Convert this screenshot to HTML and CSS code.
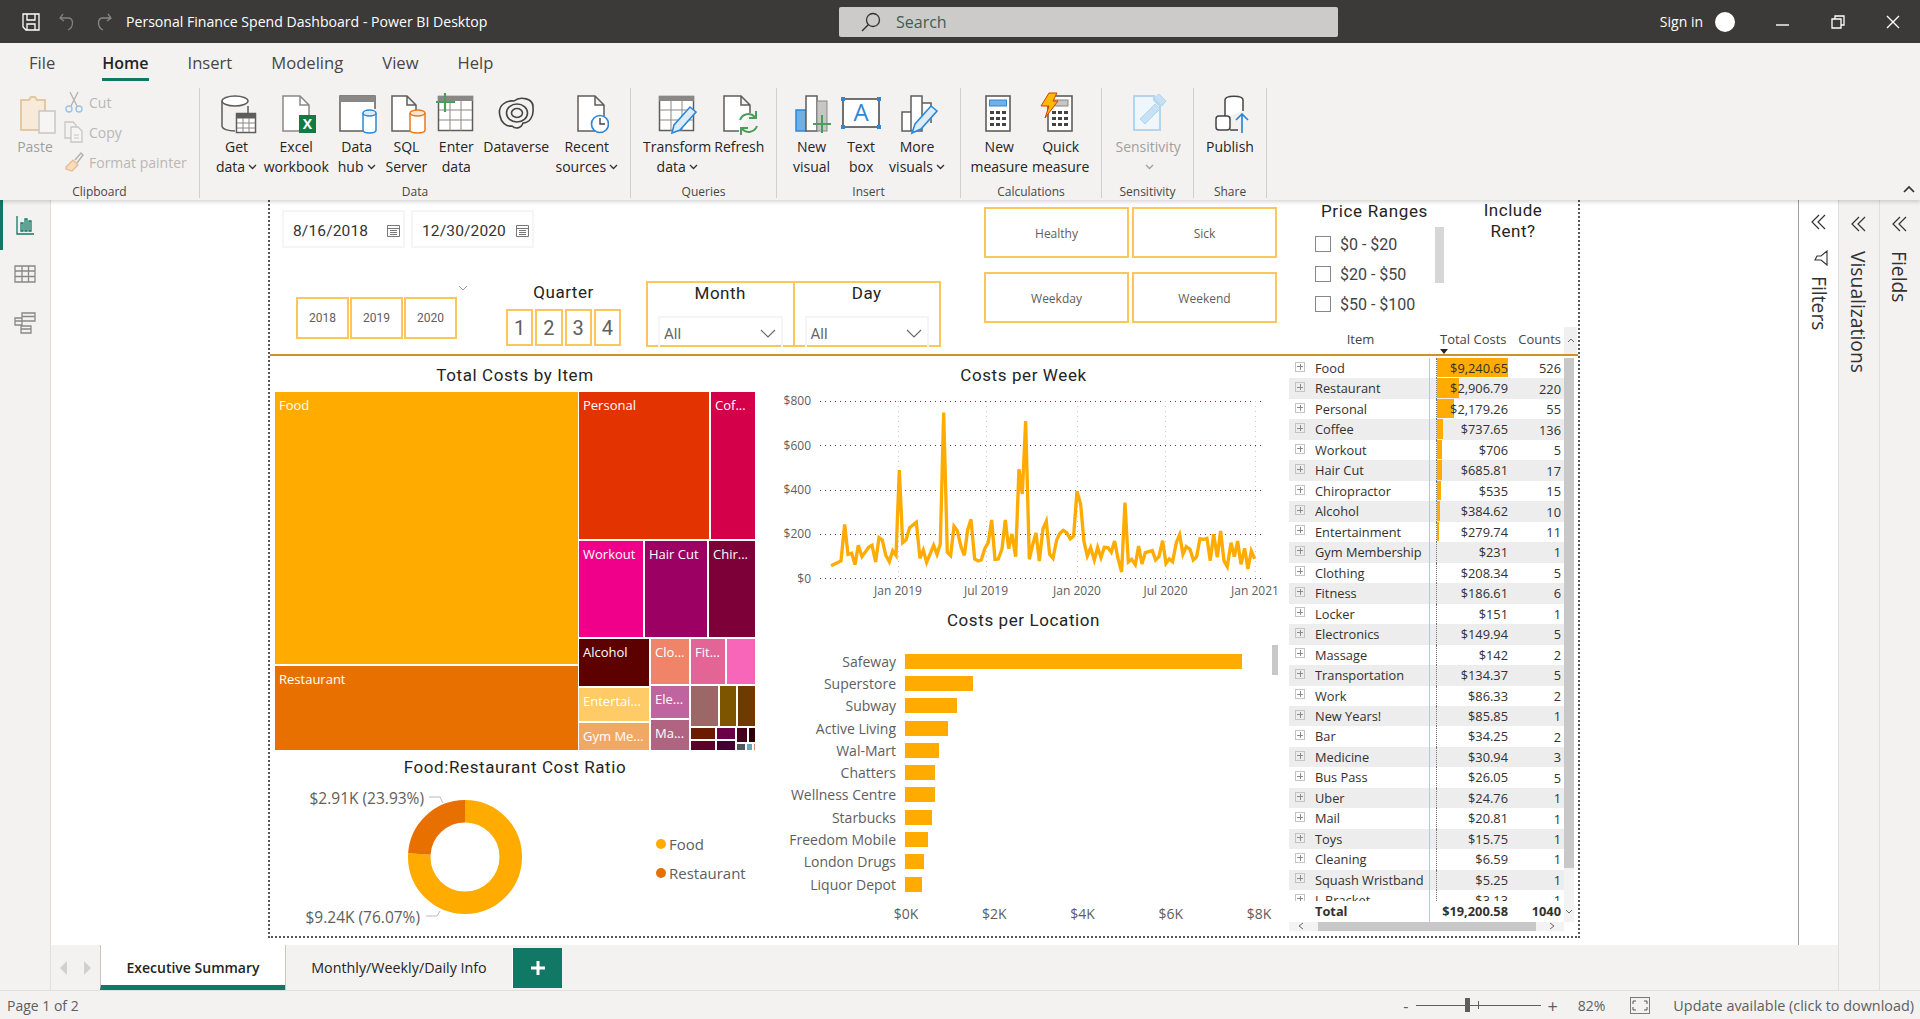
FILE: index.html
```html
<!DOCTYPE html>
<html lang="en">
<head>
    <meta charset="UTF-8">
    <title>Personal Finance Spend Dashboard - Power BI Desktop</title>
    <link rel="stylesheet" href="styles.css">
</head>
<body>
    <!-- title bar -->
    <header class="titlebar">
        <div class="tb-left">
            <svg class="tb-save" width="18" height="18" viewBox="0 0 18 18"><path d="M1 1h16v16H4l-3-3zM5 1v6h8V1M5 17v-6h8v6" fill="none" stroke="#fff" stroke-width="1.3"/></svg>
            <svg class="tb-undo" width="18" height="18" viewBox="0 0 18 18"><path d="M5 1L2 5l4 3M2 5h8c6 0 6 9 0 12" fill="none" stroke="#8a8886" stroke-width="1.3"/></svg>
            <svg class="tb-redo" width="18" height="18" viewBox="0 0 18 18"><path d="M13 1l3 4-4 3M16 5H8c-6 0-6 9 0 12" fill="none" stroke="#8a8886" stroke-width="1.3"/></svg>
            <span class="tb-title">Personal Finance Spend Dashboard - Power BI Desktop</span>
        </div>
        <div class="search">
            <svg width="22" height="22" viewBox="0 0 22 22"><circle cx="13" cy="9" r="6.5" fill="none" stroke="#323130" stroke-width="1.3"/><path d="M8.5 13.5L2 20" stroke="#323130" stroke-width="1.5"/></svg>
            <span>Search</span>
        </div>
        <div class="tb-right">
            <span class="signin">Sign in</span>
            <span class="avatar"></span>
            <svg class="win-btn" width="14" height="14" viewBox="0 0 14 14"><path d="M0 10h13" stroke="#fff" stroke-width="1.4"/></svg>
            <svg class="win-btn" width="14" height="14" viewBox="0 0 14 14"><path d="M1 4h9v9H1zM4 4V1h9v9h-3" fill="none" stroke="#fff" stroke-width="1.3"/></svg>
            <svg class="win-btn" width="14" height="14" viewBox="0 0 14 14"><path d="M1 1l12 12M13 1L1 13" stroke="#fff" stroke-width="1.4"/></svg>
        </div>
    </header>

    <!-- ribbon -->
    <section class="ribbon">
        <nav class="rb-tabs">
            <span class="rb-tab">File</span>
            <span class="rb-tab active">Home</span>
            <span class="rb-tab">Insert</span>
            <span class="rb-tab">Modeling</span>
            <span class="rb-tab">View</span>
            <span class="rb-tab">Help</span>
        </nav>
        <div class="rb-body">
            <div class="rb-group g-clip">
                <div class="rb-items">
                    <div class="rb-item off paste">
                        <svg class="ri" width="44" height="44" viewBox="0 0 44 44"><path d="M8 8h8l2-3h4l2 3h8v30H8z" fill="#f7ead8" stroke="#e3c9a2" stroke-width="2"/><rect x="26" y="19" width="16" height="22" fill="#f6f5f4" stroke="#c8c6c4" stroke-width="1.5"/></svg>
                        <span>Paste</span>
                    </div>
                    <div class="rb-small">
                        <div class="sm-row">
                            <svg width="20" height="22" viewBox="0 0 20 22"><path d="M6 1l7 14M14 1L7 15" stroke="#b3b0ad" stroke-width="1.3"/><circle cx="5" cy="18" r="3" fill="none" stroke="#9cc3e5" stroke-width="1.4"/><circle cx="15" cy="18" r="3" fill="none" stroke="#9cc3e5" stroke-width="1.4"/></svg>
                            <span>Cut</span>
                        </div>
                        <div class="sm-row">
                            <svg width="20" height="22" viewBox="0 0 20 22"><path d="M1 1h8l3 3v13H1z" fill="none" stroke="#c8c6c4" stroke-width="1.3"/><path d="M7 6h7l4 4v11H7z" fill="#f6f5f4" stroke="#c8c6c4" stroke-width="1.3"/><path d="M10 14h5M10 17h5" stroke="#c8c6c4"/></svg>
                            <span>Copy</span>
                        </div>
                        <div class="sm-row">
                            <svg width="20" height="22" viewBox="0 0 20 22"><path d="M2 16l7-7 5 5-6 6-6-2z" fill="#f7dcc0" stroke="#e8b98a" stroke-width="1.2"/><path d="M11 9l6-7 2 2-6 8" fill="none" stroke="#b3b0ad" stroke-width="1.4"/></svg>
                            <span>Format painter</span>
                        </div>
                    </div>
                </div>
                <div class="rb-label">Clipboard</div>
            </div>

            <div class="rb-group g-data">
                <div class="rb-items">
                    <div class="rb-item">
                        <svg class="ri" width="44" height="44" viewBox="0 0 44 44"><ellipse cx="20" cy="9" rx="13" ry="5" fill="#fff" stroke="#5f5d5b" stroke-width="1.5"/><path d="M7 9v25c0 3 6 5 13 5M33 14v8" fill="none" stroke="#5f5d5b" stroke-width="1.5"/><rect x="21.500" y="21.500" width="19" height="19" fill="#fff" stroke="#5f5d5b" stroke-width="1.5"/><rect x="21.500" y="21.500" width="19" height="5" fill="#5f5d5b"/><path d="M28 26v14M34 26v14M22 31h18M22 36h18" stroke="#8a8886"/></svg>
                        <span>Get</span><span>data<svg class="dd" width="9" height="6" viewBox="0 0 9 6"><path d="M1 1l3.500 3.500L8 1" fill="none" stroke="#323130" stroke-width="1.3"/></svg></span>
                    </div>
                    <div class="rb-item">
                        <svg class="ri" width="44" height="44" viewBox="0 0 44 44"><path d="M9 4h17l9 9v26H9z" fill="#fff" stroke="#8a8886" stroke-width="1.5"/><path d="M26 4v9h9" fill="none" stroke="#8a8886" stroke-width="1.5"/><rect x="25" y="23" width="17" height="18" fill="#107c41"/><text class="ri-x" x="33.500" y="37">X</text></svg>
                        <span>Excel</span><span>workbook</span>
                    </div>
                    <div class="rb-item">
                        <svg class="ri" width="44" height="44" viewBox="0 0 44 44"><path d="M32 39H5V4h35v13" fill="#fff" stroke="#5f5d5b" stroke-width="1.5"/><rect x="5" y="4" width="35" height="6" fill="#8a8886"/><path d="M28 21v17c0 4 13 4 13 0V21" fill="#fff" stroke="#2b88d8" stroke-width="1.5"/><ellipse cx="34.500" cy="21" rx="6.500" ry="3" fill="#deecf9" stroke="#2b88d8" stroke-width="1.5"/></svg>
                        <span>Data</span><span>hub<svg class="dd" width="9" height="6" viewBox="0 0 9 6"><path d="M1 1l3.500 3.500L8 1" fill="none" stroke="#323130" stroke-width="1.3"/></svg></span>
                    </div>
                    <div class="rb-item">
                        <svg class="ri" width="44" height="44" viewBox="0 0 44 44"><path d="M26 39H8V4h15l9 9v6M23 4v9h9" fill="#fff" stroke="#5f5d5b" stroke-width="1.5"/><path d="M26 21v17c0 4 15 4 15 0V21" fill="#fff" stroke="#e8791e" stroke-width="1.5"/><ellipse cx="33.500" cy="21" rx="7.500" ry="3" fill="#fde7d3" stroke="#e8791e" stroke-width="1.5"/></svg>
                        <span>SQL</span><span>Server</span>
                    </div>
                    <div class="rb-item">
                        <svg class="ri" width="44" height="44" viewBox="0 0 44 44"><rect x="4.500" y="4.500" width="34" height="34" fill="#fff" stroke="#5f5d5b" stroke-width="1.5"/><rect x="4" y="4" width="35" height="5" fill="#8a8886"/><path d="M16 9v30M27 9v30M5 18h33M5 28h33" stroke="#8a8886"/><path d="M11 1v19M2 10h19" stroke="#4a9e5c" stroke-width="2.2"/></svg>
                        <span>Enter</span><span>data</span>
                    </div>
                    <div class="rb-item">
                        <svg class="ri" width="44" height="44" viewBox="0 0 44 44"><path d="M6 24c-3-11 7-16 14-15 6-5 20-3 19 7 1 9-4 15-10 15-2 6-8 6-11 3-6 1-11-4-12-10z" fill="none" stroke="#444" stroke-width="1.6"/><ellipse cx="23" cy="21" rx="10.500" ry="9" fill="none" stroke="#444" stroke-width="1.6"/><ellipse cx="23" cy="21" rx="5.500" ry="4.500" fill="none" stroke="#444" stroke-width="1.6"/></svg>
                        <span>Dataverse</span><span>&nbsp;</span>
                    </div>
                    <div class="rb-item">
                        <svg class="ri" width="44" height="44" viewBox="0 0 44 44"><path d="M30 39H13V4h17l9 9v11M30 4v9h9" fill="#fff" stroke="#5f5d5b" stroke-width="1.5"/><circle cx="35" cy="32" r="8.500" fill="#fff" stroke="#2b88d8" stroke-width="1.7"/><path d="M35 26v6h5" fill="none" stroke="#444" stroke-width="1.4"/></svg>
                        <span>Recent</span><span>sources<svg class="dd" width="9" height="6" viewBox="0 0 9 6"><path d="M1 1l3.500 3.500L8 1" fill="none" stroke="#323130" stroke-width="1.3"/></svg></span>
                    </div>
                </div>
                <div class="rb-label">Data</div>
            </div>

            <div class="rb-group g-query">
                <div class="rb-items">
                    <div class="rb-item">
                        <svg class="ri" width="44" height="44" viewBox="0 0 44 44"><rect x="4.500" y="4.500" width="34" height="34" fill="#fff" stroke="#5f5d5b" stroke-width="1.5"/><rect x="4" y="4" width="35" height="5" fill="#8a8886"/><path d="M16 9v30M27 9v30M5 18h33M5 28h33" stroke="#8a8886"/><path d="M35 15l6 5-16 18-8 3 2-8z" fill="#deecf9" stroke="#2b88d8" stroke-width="1.6"/></svg>
                        <span>Transform</span><span>data<svg class="dd" width="9" height="6" viewBox="0 0 9 6"><path d="M1 1l3.500 3.500L8 1" fill="none" stroke="#323130" stroke-width="1.3"/></svg></span>
                    </div>
                    <div class="rb-item">
                        <svg class="ri" width="44" height="44" viewBox="0 0 44 44"><path d="M22 39H7V4h17l9 9v8M24 4v9h9" fill="#fff" stroke="#5f5d5b" stroke-width="1.5"/><path d="M23 28a9 9 0 0 1 15-3M40 34a9 9 0 0 1-15 3" fill="none" stroke="#4a9e5c" stroke-width="2"/><path d="M39 19v7h-7M24 43v-7h7" fill="none" stroke="#4a9e5c" stroke-width="2"/></svg>
                        <span>Refresh</span><span>&nbsp;</span>
                    </div>
                </div>
                <div class="rb-label">Queries</div>
            </div>

            <div class="rb-group g-insert">
                <div class="rb-items">
                    <div class="rb-item">
                        <svg class="ri" width="44" height="44" viewBox="0 0 44 44"><rect x="6" y="18" width="10" height="21" fill="#71afe5" stroke="#2b88d8" stroke-width="1.5"/><rect x="16" y="4" width="11" height="35" fill="#fff" stroke="#5f5d5b" stroke-width="1.5"/><rect x="27" y="9" width="10" height="30" fill="#c8c6c4" stroke="#8a8886"/><path d="M32 23v18M23 32h18" stroke="#4a9e5c" stroke-width="2"/></svg>
                        <span>New</span><span>visual</span>
                    </div>
                    <div class="rb-item">
                        <svg class="ri" width="44" height="44" viewBox="0 0 44 44"><rect x="4" y="7" width="36" height="28" fill="#fff" stroke="#444" stroke-width="1.5"/><path d="M2 5h4v4H2zM38 5h4v4h-4zM2 33h4v4H2zM38 33h4v4h-4z" fill="#2b88d8"/><text class="ri-a" x="22" y="29">A</text></svg>
                        <span>Text</span><span>box</span>
                    </div>
                    <div class="rb-item">
                        <svg class="ri" width="44" height="44" viewBox="0 0 44 44"><path d="M7 20h9v19H7zM16 4h11v35H16zM27 11h9v20" fill="#fff" stroke="#5f5d5b" stroke-width="1.5"/><path d="M36 14l6 5-16 18-9 4 3-9z" fill="#deecf9" stroke="#2b88d8" stroke-width="1.6"/></svg>
                        <span>More</span><span>visuals<svg class="dd" width="9" height="6" viewBox="0 0 9 6"><path d="M1 1l3.500 3.500L8 1" fill="none" stroke="#323130" stroke-width="1.3"/></svg></span>
                    </div>
                </div>
                <div class="rb-label">Insert</div>
            </div>

            <div class="rb-group g-calc">
                <div class="rb-items">
                    <div class="rb-item">
                        <svg class="ri" width="44" height="44" viewBox="0 0 44 44"><rect x="9" y="4" width="24" height="35" fill="#fff" stroke="#5f5d5b" stroke-width="1.6"/><rect x="12.500" y="8" width="17" height="6" fill="#71afe5" stroke="#2b88d8"/><path d="M13 19h4v3h-4zM19 19h4v3h-4zM25 19h4v3h-4zM13 25h4v3h-4zM19 25h4v3h-4zM25 25h4v3h-4zM13 31h4v3h-4zM19 31h4v3h-4zM25 31h4v3h-4z" fill="#444"/></svg>
                        <span>New</span><span>measure</span>
                    </div>
                    <div class="rb-item">
                        <svg class="ri" width="44" height="44" viewBox="0 0 44 44"><rect x="9" y="4" width="24" height="35" fill="#fff" stroke="#5f5d5b" stroke-width="1.6"/><rect x="15" y="8" width="14" height="6" fill="#c8c6c4" stroke="#8a8886"/><path d="M13 19h4v3h-4zM19 19h4v3h-4zM25 19h4v3h-4zM13 25h4v3h-4zM19 25h4v3h-4zM25 25h4v3h-4zM13 31h4v3h-4zM19 31h4v3h-4zM25 31h4v3h-4z" fill="#444"/><path d="M10 1h8l-4 8h5L6 26l4-12H2z" fill="#ffb900" stroke="#d83b01"/></svg>
                        <span>Quick</span><span>measure</span>
                    </div>
                </div>
                <div class="rb-label">Calculations</div>
            </div>

            <div class="rb-group g-sens">
                <div class="rb-items">
                    <div class="rb-item off">
                        <svg class="ri" width="44" height="44" viewBox="0 0 44 44"><path d="M8 4h20v4l6 6v24H8z" fill="#f0f7fc" stroke="#b3d6ee" stroke-width="2"/><path d="M14 27l15-15 5 5-15 15z" fill="#c7e0f4" stroke="#b3d6ee"/><path d="M28 6l5-4 7 7-4 5z" fill="#c7e0f4" stroke="#b3d6ee"/></svg>
                        <span>Sensitivity</span>
                        <span><svg class="dd" width="9" height="6" viewBox="0 0 9 6"><path d="M1 1l3.500 3.500L8 1" fill="none" stroke="#a19f9d" stroke-width="1.3"/></svg></span>
                    </div>
                </div>
                <div class="rb-label">Sensitivity</div>
            </div>

            <div class="rb-group g-share">
                <div class="rb-items">
                    <div class="rb-item">
                        <svg class="ri" width="44" height="44" viewBox="0 0 44 44"><path d="M17 25V8c0-5 18-5 18 0v11" fill="#fff" stroke="#444" stroke-width="1.5"/><rect x="8" y="24" width="14" height="14" rx="3" fill="#fff" stroke="#444" stroke-width="1.5"/><path d="M22 38h8" stroke="#444" stroke-width="1.5"/><path d="M34 41V22M28 28l6-6 6 6" fill="none" stroke="#2b88d8" stroke-width="1.7"/></svg>
                        <span>Publish</span><span>&nbsp;</span>
                    </div>
                </div>
                <div class="rb-label">Share</div>
            </div>
            <svg class="rb-collapse" width="12" height="8" viewBox="0 0 12 8"><path d="M1 7l5-5 5 5" fill="none" stroke="#323130" stroke-width="1.7"/></svg>
        </div>
    </section>

    <main class="workspace">
        <!-- left rail -->
        <aside class="rail">
            <div class="rail-btn active"><svg width="20" height="20" viewBox="0 0 20 20"><path d="M2 1v18h17M6 16V8h2v8zM10 16V4h2v12zM14 16V6h2v10z" fill="none" stroke="#117865" stroke-width="1.3"/></svg></div>
            <div class="rail-btn"><svg width="22" height="20" viewBox="0 0 22 20"><path d="M1 2h20v16H1zM1 7h20M1 12.500h20M8 2v16M14.500 2v16" fill="none" stroke="#8a8886" stroke-width="1.3"/></svg></div>
            <div class="rail-btn"><svg width="22" height="22" viewBox="0 0 22 22"><path d="M8 1h13v8H8zM8 4.500h13M1 6h7v7H1zM1 9h7M7 14h10v7H7zM7 17h10" fill="none" stroke="#8a8886" stroke-width="1.3"/></svg></div>
        </aside>

        <div class="center">
            <div class="canvas">
                <div class="report">
                    <!-- slicers across the top -->
                    <div class="slicers">
                        <div class="sl-left">
                            <div class="dates">
                                <div class="date-box"><span>8/16/2018</span><svg width="13" height="13" viewBox="0 0 13 13"><path d="M.5 1.500h12v11H.5zM.5 4.500h12M3 6.500h7M3 8.500h7M3 10.500h7" fill="none" stroke="#777"/></svg></div>
                                <div class="date-box"><span>12/30/2020</span><svg width="13" height="13" viewBox="0 0 13 13"><path d="M.5 1.500h12v11H.5zM.5 4.500h12M3 6.500h7M3 8.500h7M3 10.500h7" fill="none" stroke="#777"/></svg></div>
                            </div>
                            <div class="sl-row">
                                <div class="years">
                                    <div class="tile">2018</div>
                                    <div class="tile">2019</div>
                                    <div class="tile">2020</div>
                                    <svg class="years-chev" width="10" height="6" viewBox="0 0 10 6"><path d="M1 1l4 4 4-4" fill="none" stroke="#999"/></svg>
                                </div>
                                <div class="quarter">
                                    <div class="din-label">Quarter</div>
                                    <div class="q-tiles">
                                        <div class="tile q">1</div>
                                        <div class="tile q">2</div>
                                        <div class="tile q">3</div>
                                        <div class="tile q">4</div>
                                    </div>
                                </div>
                                <div class="pickers">
                                    <div class="picker">
                                        <div class="din-label">Month</div>
                                        <div class="dropdown"><span>All</span><svg width="16" height="10" viewBox="0 0 16 10"><path d="M1 1l7 7 7-7" fill="none" stroke="#666" stroke-width="1.1"/></svg></div>
                                    </div>
                                    <div class="picker">
                                        <div class="din-label">Day</div>
                                        <div class="dropdown"><span>All</span><svg width="16" height="10" viewBox="0 0 16 10"><path d="M1 1l7 7 7-7" fill="none" stroke="#666" stroke-width="1.1"/></svg></div>
                                    </div>
                                </div>
                            </div>
                        </div>
                        <div class="health">
                            <div class="tile">Healthy</div>
                            <div class="tile">Sick</div>
                            <div class="tile">Weekday</div>
                            <div class="tile">Weekend</div>
                        </div>
                        <div class="sl-right">
                            <div class="sl-right-top">
                                <div class="prices">
                                    <div class="price-list">
                                        <div class="din-label">Price Ranges</div>
                                        <div class="check-row"><span class="check"></span>$0 - $20</div>
                                        <div class="check-row"><span class="check"></span>$20 - $50</div>
                                        <div class="check-row"><span class="check"></span>$50 - $100</div>
                                    </div>
                                    <div class="price-scroll"></div>
                                </div>
                                <div class="din-label rent">Include<br>Rent?</div>
                            </div>
                            <div class="tbl-head">
                                <span class="th-item">Item</span>
                                <span class="th-total">Total Costs<i class="sort"></i></span>
                                <span class="th-count">Counts</span>
                                <span class="th-scroll"><svg width="8" height="5" viewBox="0 0 8 5"><path d="M1 4l3-3 3 3" fill="none" stroke="#666"/></svg></span>
                            </div>
                        </div>
                    </div>

                    <div class="visuals">
                        <!-- column 1 -->
                        <div class="col-one">
                            <div class="v-title">Total Costs by Item</div>
                            <div class="tm">
                                <div class="tm-main">
                                    <div class="tm-cell tm-food">Food</div>
                                    <div class="tm-cell tm-rest">Restaurant</div>
                                </div>
                                <div class="tm-side">
                                    <div class="tm-row tm-r1">
                                        <div class="tm-cell tm-personal">Personal</div>
                                        <div class="tm-cell tm-coffee">Cof...</div>
                                    </div>
                                    <div class="tm-row tm-r2">
                                        <div class="tm-cell tm-workout">Workout</div>
                                        <div class="tm-cell tm-hair">Hair Cut</div>
                                        <div class="tm-cell tm-chiro">Chir...</div>
                                    </div>
                                    <div class="tm-row tm-r3">
                                        <div class="tm-col tm-ca">
                                            <div class="tm-cell tm-alcohol">Alcohol</div>
                                            <div class="tm-cell tm-ent">Entertai...</div>
                                            <div class="tm-cell tm-gym">Gym Me...</div>
                                        </div>
                                        <div class="tm-col tm-cb">
                                            <div class="tm-cell tm-clo">Clo...</div>
                                            <div class="tm-cell tm-ele">Ele...</div>
                                            <div class="tm-cell tm-ma">Ma...</div>
                                        </div>
                                        <div class="tm-col tm-cc">
                                            <div class="tm-row tm-x1">
                                                <div class="tm-cell tm-fit">Fit...</div>
                                                <div class="tm-cell tm-pink"></div>
                                            </div>
                                            <div class="tm-row tm-x2">
                                                <div class="tm-cell tm-t1"></div>
                                                <div class="tm-cell tm-t2"></div>
                                                <div class="tm-cell tm-t3"></div>
                                            </div>
                                            <div class="tm-row tm-x3">
                                                <div class="tm-col tm-s1"><div class="tm-cell tm-u1"></div><div class="tm-cell tm-u2"></div></div>
                                                <div class="tm-col tm-s2"><div class="tm-cell tm-u3"></div><div class="tm-cell tm-u4"></div></div>
                                                <div class="tm-col tm-s3">
                                                    <div class="tm-row tm-y1"><div class="tm-cell tm-u5"></div><div class="tm-cell tm-u6"></div></div>
                                                    <div class="tm-row tm-y2"><div class="tm-cell tm-u7"></div><div class="tm-cell tm-u8"></div><div class="tm-cell tm-u9"></div></div>
                                                </div>
                                            </div>
                                        </div>
                                    </div>
                                </div>
                            </div>
                            <div class="v-title t2">Food:Restaurant Cost Ratio</div>
                            <div class="donut-wrap">
                                <svg class="donut" width="380" height="152" viewBox="0 0 380 152">
                                    <g transform="rotate(-90 195 73)">
                                        <circle cx="195" cy="73" r="45.750" fill="none" stroke="#ffab00" stroke-width="22.500" pathLength="100" stroke-dasharray="76.070 100"/>
                                        <circle cx="195" cy="73" r="45.750" fill="none" stroke="#e87000" stroke-width="22.500" pathLength="100" stroke-dasharray="23.930 100" stroke-dashoffset="-76.070"/>
                                    </g>
                                    <path d="M159 13h11l3 6M156 132h11l3-5" fill="none" stroke="#bbb"/>
                                    <text class="d-lbl" x="154" y="20">$2.91K (23.93%)</text>
                                    <text class="d-lbl" x="150" y="139">$9.24K (76.07%)</text>
                                </svg>
                                <div class="legend">
                                    <div class="lg-row"><i class="lg-dot food"></i>Food</div>
                                    <div class="lg-row"><i class="lg-dot rest"></i>Restaurant</div>
                                </div>
                            </div>
                        </div>

                        <!-- column 2 -->
                        <div class="col-two">
                            <div class="v-title">Costs per Week</div>
                            <svg class="line-chart" width="518" height="212" viewBox="0 0 518 212">
                                <path class="grid-h" d="M49 9.500h445M49 53.500h445M49 98.500h445M49 142.500h445M49 186.500h445"/>
                                <path class="grid-v" d="M127.500 9v177M215.500 9v177M306.500 9v177M394.500 9v177M484.500 9v177"/>
                                <text class="ax-y" x="40" y="13">$800</text>
                                <text class="ax-y" x="40" y="57.500">$600</text>
                                <text class="ax-y" x="40" y="102">$400</text>
                                <text class="ax-y" x="40" y="146">$200</text>
                                <text class="ax-y" x="40" y="191">$0</text>
                                <text class="ax-x" x="127" y="203">Jan 2019</text>
                                <text class="ax-x" x="215" y="203">Jul 2019</text>
                                <text class="ax-x" x="306" y="203">Jan 2020</text>
                                <text class="ax-x" x="394.500" y="203">Jul 2020</text>
                                <text class="ax-x" x="484" y="203">Jan 2021</text>
                                <g transform="translate(-1 -32) scale(.3333)">
                                    <polyline class="cost-line" points="183,617 213,603 224,493 234,583 245,580 255,614 265,556 276,590 296,562 306,556 317,606 327,533 337,540 347,585 358,605 368,572 378,586 388,330 398,548 408,540 419,503 439,487 450,595 460,570 470,607 491,556 501,583 511,552 521,158 532,577 542,587 552,499 562,512 573,560 583,586 593,510 603,478 614,597 624,603 634,600 644,567 655,547 665,480 675,598 685,597 696,567 706,480 716,566 726,522 737,590 747,328 757,402 767,183 778,598 788,555 798,519 808,603 819,507 829,484 839,583 849,595 860,540 870,520 880,511 890,518 901,537 911,528 921,394 932,432 942,545 952,588 962,563 973,600 983,562 993,593 1003,562 1014,563 1024,577 1034,543 1044,595 1055,636 1065,428 1075,606 1085,598 1096,614 1106,558 1116,612 1126,578 1147,572 1157,600 1167,590 1178,542 1188,610 1198,597 1208,605 1219,548 1229,524 1239,583 1249,560 1260,568 1270,600 1280,590 1290,536 1301,538 1311,535 1321,602 1331,523 1342,592 1352,513 1362,602 1372,620 1383,548 1393,590 1403,543 1413,613 1424,565 1434,627 1444,573 1454,597"/>
                                </g>
                            </svg>
                            <div class="v-title t3">Costs per Location</div>
                            <div class="bars">
                                <div class="bar-row"><span>Safeway</span><div class="bar" style="width:337px"></div></div>
                                <div class="bar-row"><span>Superstore</span><div class="bar" style="width:68px"></div></div>
                                <div class="bar-row"><span>Subway</span><div class="bar" style="width:52px"></div></div>
                                <div class="bar-row"><span>Active Living</span><div class="bar" style="width:43px"></div></div>
                                <div class="bar-row"><span>Wal-Mart</span><div class="bar" style="width:34px"></div></div>
                                <div class="bar-row"><span>Chatters</span><div class="bar" style="width:30px"></div></div>
                                <div class="bar-row"><span>Wellness Centre</span><div class="bar" style="width:30px"></div></div>
                                <div class="bar-row"><span>Starbucks</span><div class="bar" style="width:27px"></div></div>
                                <div class="bar-row"><span>Freedom Mobile</span><div class="bar" style="width:23px"></div></div>
                                <div class="bar-row"><span>London Drugs</span><div class="bar" style="width:19px"></div></div>
                                <div class="bar-row"><span>Liquor Depot</span><div class="bar" style="width:17px"></div></div>
                                <div class="bars-scroll"></div>
                            </div>
                            <div class="bar-axis">
                                <span>$0K</span><span>$2K</span><span>$4K</span><span>$6K</span><span>$8K</span>
                            </div>
                        </div>

                        <!-- column 3: item table -->
                        <div class="col-three">
                            <div class="tbl-main">
                                <div class="tbl-rows">
                                    <div class="t-row"><i class="exp"></i><span class="t-name">Food</span><span class="t-gap"></span><span class="t-total"><i class="t-bar" style="width:100%"></i><b>$9,240.65</b></span><span class="t-count">526</span></div>
                                    <div class="t-row"><i class="exp"></i><span class="t-name">Restaurant</span><span class="t-gap"></span><span class="t-total"><i class="t-bar" style="width:31.5%"></i><b>$2,906.79</b></span><span class="t-count">220</span></div>
                                    <div class="t-row"><i class="exp"></i><span class="t-name">Personal</span><span class="t-gap"></span><span class="t-total"><i class="t-bar" style="width:23.6%"></i><b>$2,179.26</b></span><span class="t-count">55</span></div>
                                    <div class="t-row"><i class="exp"></i><span class="t-name">Coffee</span><span class="t-gap"></span><span class="t-total"><i class="t-bar" style="width:8%"></i><b>$737.65</b></span><span class="t-count">136</span></div>
                                    <div class="t-row"><i class="exp"></i><span class="t-name">Workout</span><span class="t-gap"></span><span class="t-total"><i class="t-bar" style="width:7.6%"></i><b>$706</b></span><span class="t-count">5</span></div>
                                    <div class="t-row"><i class="exp"></i><span class="t-name">Hair Cut</span><span class="t-gap"></span><span class="t-total"><i class="t-bar" style="width:7.4%"></i><b>$685.81</b></span><span class="t-count">17</span></div>
                                    <div class="t-row"><i class="exp"></i><span class="t-name">Chiropractor</span><span class="t-gap"></span><span class="t-total"><i class="t-bar" style="width:5.8%"></i><b>$535</b></span><span class="t-count">15</span></div>
                                    <div class="t-row"><i class="exp"></i><span class="t-name">Alcohol</span><span class="t-gap"></span><span class="t-total"><i class="t-bar" style="width:4.2%"></i><b>$384.62</b></span><span class="t-count">10</span></div>
                                    <div class="t-row"><i class="exp"></i><span class="t-name">Entertainment</span><span class="t-gap"></span><span class="t-total"><i class="t-bar" style="width:3%"></i><b>$279.74</b></span><span class="t-count">11</span></div>
                                    <div class="t-row"><i class="exp"></i><span class="t-name">Gym Membership</span><span class="t-gap"></span><span class="t-total"><b>$231</b></span><span class="t-count">1</span></div>
                                    <div class="t-row"><i class="exp"></i><span class="t-name">Clothing</span><span class="t-gap"></span><span class="t-total"><b>$208.34</b></span><span class="t-count">5</span></div>
                                    <div class="t-row"><i class="exp"></i><span class="t-name">Fitness</span><span class="t-gap"></span><span class="t-total"><b>$186.61</b></span><span class="t-count">6</span></div>
                                    <div class="t-row"><i class="exp"></i><span class="t-name">Locker</span><span class="t-gap"></span><span class="t-total"><b>$151</b></span><span class="t-count">1</span></div>
                                    <div class="t-row"><i class="exp"></i><span class="t-name">Electronics</span><span class="t-gap"></span><span class="t-total"><b>$149.94</b></span><span class="t-count">5</span></div>
                                    <div class="t-row"><i class="exp"></i><span class="t-name">Massage</span><span class="t-gap"></span><span class="t-total"><b>$142</b></span><span class="t-count">2</span></div>
                                    <div class="t-row"><i class="exp"></i><span class="t-name">Transportation</span><span class="t-gap"></span><span class="t-total"><b>$134.37</b></span><span class="t-count">5</span></div>
                                    <div class="t-row"><i class="exp"></i><span class="t-name">Work</span><span class="t-gap"></span><span class="t-total"><b>$86.33</b></span><span class="t-count">2</span></div>
                                    <div class="t-row"><i class="exp"></i><span class="t-name">New Years!</span><span class="t-gap"></span><span class="t-total"><b>$85.85</b></span><span class="t-count">1</span></div>
                                    <div class="t-row"><i class="exp"></i><span class="t-name">Bar</span><span class="t-gap"></span><span class="t-total"><b>$34.25</b></span><span class="t-count">2</span></div>
                                    <div class="t-row"><i class="exp"></i><span class="t-name">Medicine</span><span class="t-gap"></span><span class="t-total"><b>$30.94</b></span><span class="t-count">3</span></div>
                                    <div class="t-row"><i class="exp"></i><span class="t-name">Bus Pass</span><span class="t-gap"></span><span class="t-total"><b>$26.05</b></span><span class="t-count">5</span></div>
                                    <div class="t-row"><i class="exp"></i><span class="t-name">Uber</span><span class="t-gap"></span><span class="t-total"><b>$24.76</b></span><span class="t-count">1</span></div>
                                    <div class="t-row"><i class="exp"></i><span class="t-name">Mail</span><span class="t-gap"></span><span class="t-total"><b>$20.81</b></span><span class="t-count">1</span></div>
                                    <div class="t-row"><i class="exp"></i><span class="t-name">Toys</span><span class="t-gap"></span><span class="t-total"><b>$15.75</b></span><span class="t-count">1</span></div>
                                    <div class="t-row"><i class="exp"></i><span class="t-name">Cleaning</span><span class="t-gap"></span><span class="t-total"><b>$6.59</b></span><span class="t-count">1</span></div>
                                    <div class="t-row"><i class="exp"></i><span class="t-name">Squash Wristband</span><span class="t-gap"></span><span class="t-total"><b>$5.25</b></span><span class="t-count">1</span></div>
                                    <div class="t-row"><i class="exp"></i><span class="t-name">L Bracket</span><span class="t-gap"></span><span class="t-total"><b>$3.13</b></span><span class="t-count">1</span></div>
                                </div>
                                <div class="t-row t-sum"><i></i><span class="t-name">Total</span><span class="t-gap"></span><span class="t-total"><b>$19,200.58</b></span><span class="t-count">1040</span></div>
                                <div class="hbar">
                                    <svg width="6" height="8" viewBox="0 0 6 8"><path d="M5 1L1 4l4 3" fill="none" stroke="#666"/></svg>
                                    <span class="hbar-thumb"></span>
                                    <svg width="6" height="8" viewBox="0 0 6 8"><path d="M1 1l4 3-4 3" fill="none" stroke="#666"/></svg>
                                </div>
                            </div>
                            <div class="vbar">
                                <span class="vbar-thumb"></span>
                                <svg width="8" height="5" viewBox="0 0 8 5"><path d="M1 1l3 3 3-3" fill="none" stroke="#666"/></svg>
                            </div>
                        </div>
                    </div>
                </div>

                <aside class="filters-pane">
                    <svg class="dbl-chev" width="16" height="16" viewBox="0 0 16 16"><path d="M8 1L1 8l7 7M14 1L7 8l7 7" fill="none" stroke="#323130" stroke-width="1.2"/></svg>
                    <svg class="funnel" width="16" height="16" viewBox="0 0 16 16"><path d="M1 2h14L10 8v6l-4-2V8z" fill="none" stroke="#323130" stroke-width="1.1"/></svg>
                    <span class="pane-name">Filters</span>
                </aside>
            </div>

            <!-- page tabs -->
            <div class="page-tabs">
                <div class="tab-arrows">
                    <svg width="8" height="14" viewBox="0 0 8 14"><path d="M7 0v14L0 7z" fill="#d2d0ce"/></svg>
                    <svg width="8" height="14" viewBox="0 0 8 14"><path d="M1 0v14l7-7z" fill="#d2d0ce"/></svg>
                </div>
                <div class="page-tab current">Executive Summary</div>
                <div class="page-tab">Monthly/Weekly/Daily Info</div>
                <div class="page-add"><svg width="14" height="14" viewBox="0 0 14 14"><path d="M7 0v14M0 7h14" stroke="#fff" stroke-width="3"/></svg></div>
            </div>
        </div>

        <aside class="side-pane">
            <svg class="dbl-chev" width="16" height="16" viewBox="0 0 16 16"><path d="M8 1L1 8l7 7M14 1L7 8l7 7" fill="none" stroke="#323130" stroke-width="1.2"/></svg>
            <span class="pane-name">Visualizations</span>
        </aside>
        <aside class="side-pane">
            <svg class="dbl-chev" width="16" height="16" viewBox="0 0 16 16"><path d="M8 1L1 8l7 7M14 1L7 8l7 7" fill="none" stroke="#323130" stroke-width="1.2"/></svg>
            <span class="pane-name">Fields</span>
        </aside>
    </main>

    <footer class="status">
        <span class="st-page">Page 1 of 2</span>
        <div class="st-right">
            <span class="st-minus">-</span>
            <div class="slider"><i class="sl-thumb"></i><i class="sl-tick"></i></div>
            <span class="st-plus">+</span>
            <span class="st-zoom">82%</span>
            <svg class="st-fit" width="20" height="17" viewBox="0 0 20 17"><rect x=".5" y=".5" width="19" height="16" fill="none" stroke="#7a7a7a"/><path d="M3 7V4h3M14 4h3v3M3 10v3h3M14 13h3v-3" fill="none" stroke="#555"/></svg>
            <span class="st-update">Update available (click to download)</span>
        </div>
    </footer>
</body>
</html>
```

FILE: styles.css
```css
/* base */
* {
    box-sizing: border-box;
}

body {
    margin: 0;
    width: 1920px;
    height: 1019px;
    overflow: hidden;
    display: flex;
    flex-direction: column;
    font-family: "Open Sans", "Noto Sans", sans-serif;
    color: #323130;
    background: #f3f2f1;
}

svg {
    display: block;
    flex: none;
}

i {
    font-style: normal;
}

/* title bar */
.titlebar {
    height: 43px;
    flex: none;
    display: flex;
    align-items: center;
    background: #3b3a39;
    color: #fff;
}

.tb-left {
    width: 839px;
    display: flex;
    align-items: center;
    padding-left: 22px;
}

.tb-undo {
    margin-left: 18px;
    opacity: .9;
}

.tb-redo {
    margin-left: 19px;
}

.tb-title {
    margin-left: 13px;
    font-size: 14.100px;
}

.search {
    width: 499px;
    height: 30px;
    display: flex;
    align-items: center;
    gap: 14px;
    padding-left: 21px;
    background: #cdcbc9;
    border-radius: 2px;
    font-size: 16px;
    color: #3a5f57;
}

.tb-right {
    margin-left: auto;
    display: flex;
    align-items: center;
    padding-right: 20px;
}

.signin {
    font-size: 14px;
    margin-right: 12px;
}

.avatar {
    width: 20px;
    height: 20px;
    border-radius: 50%;
    background: #fff;
    margin-right: 41px;
}

.win-btn {
    margin-left: 41px;
}

.avatar + .win-btn {
    margin-left: 0;
}

/* ribbon */
.ribbon {
    height: 157px;
    flex: none;
    position: relative;
    z-index: 5;
    background: #f3f2f1;
    box-shadow: 0 2px 4px rgba(0, 0, 0, .16);
}

.rb-tabs {
    height: 38px;
    display: flex;
    align-items: flex-start;
    padding: 8px 0 0 29px;
    font-size: 16.600px;
    color: #484644;
}

.rb-tab {
    margin-right: 39px;
    line-height: 24px;
}

.rb-tab:first-child {
    margin-right: 47px;
}

.rb-tab.active {
    height: 30px;
    font-size: 16px;
    font-weight: 600;
    color: #252423;
    border-bottom: 3px solid #117865;
}

.rb-body {
    height: 119px;
    display: flex;
    padding-top: 7px;
    position: relative;
}

.rb-group {
    height: 110px;
    display: flex;
    flex-direction: column;
    justify-content: space-between;
    border-right: 1px solid #d2d0ce;
}

.g-clip { width: 200px; }
.g-data { width: 431px; }
.g-query { width: 146px; }
.g-insert { width: 184px; }
.g-calc { width: 141px; }
.g-sens { width: 92px; }
.g-share { width: 73px; }

.rb-items {
    display: flex;
}

.g-clip .rb-items { padding-left: 12px; }
.g-data .rb-items { padding-left: 11px; }
.g-query .rb-items { padding-left: 7px; }
.g-insert .rb-items { padding-left: 11px; }
.g-calc .rb-items { padding-left: 4.500px; }
.g-sens .rb-items { padding-left: 8.500px; }
.g-share .rb-items { padding-left: 7px; }

/* nudges so each button sits over its label like the real ribbon */
.g-data .rb-item:nth-child(2) { margin-left: -3.500px; }
.g-data .rb-item:nth-child(3) { margin-left: -1px; }
.g-data .rb-item:nth-child(5) { margin-left: 1px; }
.g-data .rb-item:nth-child(6) { margin-left: -1px; }
.g-data .rb-item:nth-child(7) { margin-left: -3.700px; }
.g-query .rb-item:nth-child(2) { margin-left: -7px; }
.g-insert .rb-item:nth-child(2) { margin-left: 3px; }
.g-calc .rb-item:nth-child(2) { margin-left: -6px; }

.rb-item {
    display: flex;
    flex-direction: column;
    align-items: center;
    padding: 4px 5px 0;
    font-size: 14px;
    line-height: 20px;
    white-space: nowrap;
    color: #252423;
}

.rb-item span {
    display: flex;
    align-items: center;
    min-height: 20px;
}

.rb-item .ri {
    margin: 0 -4px 1px;
}

.rb-item.off {
    color: #a19f9d;
}

.dd {
    margin-left: 3px;
}

.paste {
    margin-right: 6px;
}

.rb-small {
    font-size: 14px;
    color: #b9b7b5;
    margin-top: -1px;
}

.sm-row {
    height: 30px;
    display: flex;
    align-items: center;
    gap: 5px;
}

.rb-label {
    text-align: center;
    font-size: 12px;
    line-height: 16px;
    margin-bottom: -2px;
    color: #484644;
}

.ri-x {
    font-size: 14px;
    font-weight: 700;
    fill: #fff;
    text-anchor: middle;
}

.ri-a {
    font-size: 24px;
    fill: #2b88d8;
    text-anchor: middle;
}

.rb-collapse {
    position: absolute;
    right: 5px;
    top: 104px;
}

/* main area */
.workspace {
    height: 790px;
    flex: none;
    display: flex;
}

.rail {
    width: 51px;
    flex: none;
    border-right: 1px solid #e1dfdd;
}

.rail-btn {
    height: 50px;
    display: flex;
    align-items: center;
    justify-content: center;
    margin-top: -1px;
}

.rail-btn:first-child {
    margin-top: 0;
}

.rail-btn.active {
    box-shadow: inset 3px 0 0 #117865;
}

.center {
    width: 1787px;
    display: flex;
    flex-direction: column;
}

.canvas {
    height: 745px;
    display: flex;
    background: #fff;
}

/* report page */
.report {
    width: 1312px;
    height: 738px;
    margin-left: 217px;
    margin-right: 218px;
    flex: none;
    border: 2px dotted #555;
    border-top: none;
}

.slicers {
    height: 156px;
    display: flex;
    border-bottom: 2px solid #c9952a;
}

.din-label {
    font-family: Roboto, "Noto Sans", sans-serif;
    font-size: 17px;
    letter-spacing: .5px;
    text-align: center;
    color: #252423;
}

.tile {
    display: flex;
    align-items: center;
    justify-content: center;
    border: 2px solid #fcc65c;
    font-size: 12px;
    color: #605e5c;
}

.sl-left {
    width: 671px;
    flex: none;
}

.dates {
    display: flex;
    gap: 6px;
    margin: 10px 0 0 12px;
}

.date-box {
    width: 123px;
    height: 38px;
    display: flex;
    align-items: center;
    justify-content: space-between;
    padding: 3px 3px 0 9px;
    border: 2px solid #f5f5f5;
    font-family: Roboto, sans-serif;
    font-size: 15.500px;
    letter-spacing: .15px;
    color: #333;
}

.sl-row {
    display: flex;
    margin-top: 33px;
    height: 66px;
}

.sl-row > * {
    flex: none;
}

.years {
    width: 161px;
    height: 42px;
    margin: 16px 0 0 26px;
    display: flex;
    gap: 1px;
    position: relative;
}

.years .tile {
    flex: 1;
    font-family: Roboto, sans-serif;
}

.years-chev {
    position: absolute;
    right: -11px;
    top: -12px;
}

.quarter {
    width: 115px;
    margin-left: 49px;
}

.quarter .din-label {
    height: 28px;
    line-height: 22px;
}

.q-tiles {
    display: grid;
    grid-template-columns: repeat(4, 1fr);
    gap: 2px;
}

.tile.q {
    height: 37px;
    font-family: Roboto, sans-serif;
    font-size: 20px;
}

.pickers {
    margin-left: 25px;
    width: 295px;
    display: flex;
}

.picker {
    flex: 1;
    height: 66px;
    border: 2px solid #fcc65c;
    padding: 0 10px;
}

.picker + .picker {
    margin-left: -2px;
}

.picker .din-label {
    height: 33px;
    line-height: 20px;
}

.dropdown {
    height: 31px;
    display: flex;
    align-items: center;
    justify-content: space-between;
    padding: 3px 5px 0 4px;
    border: 2px solid #f5f5f5;
    border-bottom: none;
    font-family: Roboto, sans-serif;
    font-size: 15px;
    color: #666;
}

.health {
    width: 293px;
    height: 116px;
    margin: 7px 0 0 43px;
    flex: none;
    display: grid;
    grid-template-columns: 1fr 1fr;
    grid-auto-rows: 51px;
    gap: 14px 3px;
}

.health .tile {
    padding-top: 1px;
}

.sl-right {
    width: 287px;
    margin-left: 13px;
    flex: none;
    display: flex;
    flex-direction: column;
}

.sl-right-top {
    height: 127px;
    display: flex;
}

.prices {
    margin-left: 24px;
    width: 130px;
    display: flex;
}

.price-list {
    width: 121px;
    flex: none;
}

.price-list .din-label {
    line-height: 22px;
    margin-bottom: 7px;
    white-space: nowrap;
    letter-spacing: .65px;
}

.check-row {
    height: 30px;
    display: flex;
    align-items: center;
    gap: 9px;
    padding-left: 1px;
    font-family: Roboto, sans-serif;
    font-size: 16px;
    color: #444;
}

.check {
    width: 16px;
    height: 16px;
    border: 1.500px solid #8a8886;
}

.price-scroll {
    width: 9px;
    height: 56px;
    margin-top: 27px;
    background: #d6d6d6;
}

.rent {
    width: 100px;
    margin-left: 19px;
    line-height: 21px;
}

.tbl-head {
    height: 27px;
    display: grid;
    grid-template-columns: 141px 9px 64px 1fr 13px;
    align-items: center;
    font-size: 13px;
    color: #444;
    white-space: nowrap;
}

.th-item, .th-total, .th-count {
    margin-bottom: 4px;
}

.th-item {
    text-align: center;
}

.th-total {
    grid-column: 3;
    position: relative;
}

.th-count {
    text-align: right;
    padding-right: 3px;
}

.th-scroll {
    height: 27px;
    display: flex;
    align-items: center;
    justify-content: center;
    background: #f0f0f0;
}

.sort {
    position: absolute;
    left: 0;
    top: 19px;
    border: 4.500px solid transparent;
    border-top: 5px solid #252423;
    border-bottom: none;
}

/* visuals under the slicers */
.visuals {
    display: grid;
    grid-template-columns: 500px 519px 289px;
}

.v-title {
    height: 36px;
    line-height: 38px;
    padding-right: 12px;
    text-align: center;
    font-family: Roboto, "Noto Sans", sans-serif;
    font-size: 17px;
    letter-spacing: .6px;
    color: #252423;
}

.col-one .v-title {
    padding-right: 10px;
}

.v-title.t2 {
    height: 34px;
    line-height: 34px;
}

.v-title.t3 {
    height: 33px;
    line-height: 32px;
}

/* treemap */
.tm {
    width: 480px;
    height: 358px;
    margin-left: 5px;
    display: flex;
    gap: 1px;
    color: #fff;
    font-size: 13px;
    white-space: nowrap;
}

.tm-main {
    width: 303px;
    display: flex;
    flex-direction: column;
    gap: 2px;
}

.tm-side {
    width: 176px;
    display: flex;
    flex-direction: column;
    gap: 2px;
}

.tm-row {
    display: flex;
    gap: 2px;
}

.tm-col {
    display: flex;
    flex-direction: column;
    gap: 2px;
}

.tm-cell {
    padding: 5px 4px;
    line-height: 16px;
    overflow: hidden;
}

.tm-food { height: 272px; background: #ffab00; }
.tm-rest { height: 84px; background: #e87000; }

.tm-r1 { height: 147px; }
.tm-personal { width: 130px; background: #e23300; }
.tm-coffee { width: 44px; background: #d4004a; }

.tm-r2 { height: 96px; }
.tm-workout { width: 64px; background: #f0008a; }
.tm-hair { width: 62px; background: #9b0062; }
.tm-chiro { width: 46px; background: #7d0038; }

.tm-r3 { height: 111px; }
.tm-ca { width: 70px; }
.tm-cb { width: 38px; }
.tm-cc { width: 64px; }
.tm-alcohol { height: 47px; background: #5c0000; }
.tm-ent { height: 33px; background: #ffcb66; }
.tm-gym { height: 27px; background: #f2a865; }
.tm-clo { height: 45px; background: #ef8468; }
.tm-ele { height: 32px; background: #c0649f; }
.tm-ma { height: 30px; background: #b06481; }

.tm-x1 { height: 45px; }
.tm-fit { width: 34px; background: #e36596; }
.tm-pink { width: 28px; background: #f866b9; }
.tm-x2 { height: 40px; }
.tm-t1 { width: 27px; background: #9b6767; }
.tm-t2 { width: 16px; background: #7d5500; }
.tm-t3 { width: 17px; background: #6e3a00; }
.tm-x3 { height: 22px; }
.tm-s1 { width: 24px; }
.tm-s2 { width: 18px; }
.tm-s3 { width: 18px; }
.tm-u1 { height: 11px; background: #6d1b00; }
.tm-u2 { height: 9px; background: #5e002c; }
.tm-u3 { height: 11px; background: #6b0048; }
.tm-u4 { height: 9px; background: #430032; }
.tm-y1 { height: 14px; }
.tm-y2 { height: 6px; }
.tm-u5 { width: 10px; background: #45001e; }
.tm-u6 { width: 6px; background: #2e0006; }
.tm-u7 { width: 8px; background: #4f5960; }
.tm-u8 { width: 5px; background: #6aa5b5; }
.tm-u9 { width: 1px; background: #e08a6b; }
.tm-y1 .tm-cell, .tm-y2 .tm-cell { padding: 0; }
.tm-x2 .tm-cell, .tm-x3 .tm-cell { padding: 0; }

/* donut */
.donut-wrap {
    display: flex;
}

.d-lbl {
    font-size: 15.500px;
    fill: #605e5c;
    text-anchor: end;
}

.legend {
    margin: 45px 0 0 6px;
    font-size: 15px;
    color: #605e5c;
}

.lg-row {
    height: 29px;
    display: flex;
    align-items: center;
    gap: 3px;
}

.lg-dot {
    width: 10px;
    height: 10px;
    border-radius: 50%;
}

.lg-dot.food { background: #ffab00; }
.lg-dot.rest { background: #e87000; }

/* line chart */
.line-chart {
    margin-left: 1px;
}

.line-chart text {
    font-size: 12px;
    fill: #605e5c;
}

.line-chart .ax-y {
    text-anchor: end;
}

.line-chart .ax-x {
    text-anchor: middle;
}

.grid-h {
    fill: none;
    stroke: #7a2b2b;
    stroke-dasharray: 1 4;
}

.grid-v {
    fill: none;
    stroke: #c8c8c8;
    stroke-dasharray: 1 4;
}

.cost-line {
    fill: none;
    stroke: #ffab00;
    stroke-width: 10;
    stroke-linejoin: miter;
}

/* bar chart */
.bars {
    position: relative;
    padding-top: 13px;
}

.bar-row {
    height: 22.300px;
    display: grid;
    grid-template-columns: 126px auto;
    justify-content: start;
    align-items: center;
    column-gap: 9px;
    font-size: 14px;
    color: #605e5c;
    white-space: nowrap;
}

.bar-row span {
    text-align: right;
}

.bar {
    height: 15px;
    background: #ffab00;
}

.bars-scroll {
    position: absolute;
    right: 11px;
    top: 8px;
    width: 6px;
    height: 30px;
    background: #c8c8c8;
}

.bar-axis {
    display: flex;
    margin: 9px 0 0 92px;
    font-size: 14px;
    color: #605e5c;
}

.bar-axis span {
    flex: none;
    width: 88.250px;
    text-align: center;
}

/* table */
.col-three {
    display: flex;
    margin-top: 2px;
}

.tbl-main {
    width: 275px;
    flex: none;
}

.tbl-rows {
    height: 542.500px;
    overflow: hidden;
}

.t-row {
    height: 20.470px;
    display: grid;
    grid-template-columns: 26px 115px 6px 72px 56px;
    align-items: center;
    font-size: 12.800px;
    color: #323130;
    white-space: nowrap;
}

.tbl-rows .t-row:nth-child(even) {
    background: #ededed;
}

.exp {
    width: 10px;
    height: 10px;
    margin: -3px 0 0 6px;
    border: 1px solid #c4c4c4;
    background:
        linear-gradient(#8a8a8a, #8a8a8a) center / 6px 1px no-repeat,
        linear-gradient(#8a8a8a, #8a8a8a) center / 1px 6px no-repeat;
}

.t-name {
    height: 100%;
    line-height: 20px;
    border-right: 1.500px solid #ffc04d;
}

.t-total {
    position: relative;
    height: 100%;
    line-height: 20px;
    text-align: right;
    border-left: 1px dotted #777;
}

.t-total b {
    position: relative;
    font-weight: 400;
}

.t-bar {
    position: absolute;
    left: 0;
    top: 0;
    bottom: 1px;
    background: #ffab00;
}

.t-count {
    text-align: right;
    padding-right: 3px;
}

.t-sum {
    height: 21px;
    font-weight: 700;
    background: #fff;
}

.t-sum .t-total {
    border-left: none;
}

.t-sum .t-total b {
    font-weight: 700;
}

.hbar {
    height: 9px;
    display: flex;
    align-items: center;
    justify-content: space-between;
    padding: 0 9px;
    background: #f3f3f3;
}

.hbar-thumb {
    width: 218px;
    height: 9px;
    background: #c8c8c8;
}

.vbar {
    width: 10px;
    height: 564px;
    flex: none;
    display: flex;
    flex-direction: column;
    align-items: center;
    justify-content: space-between;
    padding-bottom: 8px;
    background: #f3f3f3;
}

.vbar-thumb {
    width: 10px;
    height: 510px;
    background: #c8c8c8;
}

/* collapsed panes */
.filters-pane, .side-pane {
    display: flex;
    flex-direction: column;
    align-items: center;
}

.filters-pane {
    width: 40px;
    padding-top: 14px;
    border-left: 1px solid #a19f9d;
    background: #fff;
}

.side-pane {
    width: 41px;
    padding-top: 16px;
    border-left: 1px solid #e1dfdd;
}

.funnel {
    margin: 20px 0 0 5px;
    transform: rotate(90deg);
}

.pane-name {
    writing-mode: vertical-rl;
    font-size: 19.300px;
    line-height: 24px;
    font-weight: 500;
    color: #323130;
}

.filters-pane .pane-name {
    margin-top: 10px;
}

.side-pane .pane-name {
    margin: 19px 3px 0 0;
}

/* page tabs */
.page-tabs {
    height: 45px;
    display: flex;
    font-size: 14.300px;
}

.tab-arrows {
    width: 49px;
    display: flex;
    align-items: center;
    justify-content: space-between;
    padding: 0 9px;
}

.page-tab {
    display: flex;
    align-items: center;
    justify-content: center;
    width: 227px;
    border-left: 1px solid #c8c6c4;
    color: #252423;
}

.page-tab.current {
    width: 185px;
    background: #fff;
    font-size: 14px;
    font-weight: 600;
    border-bottom: 5px solid #117865;
    padding-top: 5px;
}

.page-add {
    width: 50px;
    height: 40px;
    margin-top: 3px;
    display: flex;
    align-items: center;
    justify-content: center;
    background: #117865;
    border-left: 1px solid #fff;
}

/* status bar */
.status {
    height: 30px;
    flex: none;
    display: flex;
    align-items: center;
    justify-content: space-between;
    padding: 0 6px 0 7px;
    border-top: 1px solid #e1dfdd;
    font-size: 14px;
    color: #605e5c;
}

.st-right {
    display: flex;
    align-items: center;
}

.st-minus {
    margin-right: 8px;
    font-size: 16px;
}

.slider {
    width: 125px;
    height: 1px;
    position: relative;
    background: #605e5c;
}

.sl-thumb {
    position: absolute;
    left: 49px;
    top: -7px;
    width: 5px;
    height: 14px;
    background: #605e5c;
}

.sl-tick {
    position: absolute;
    left: 62px;
    top: -4px;
    width: 1px;
    height: 8px;
    background: #605e5c;
}

.st-plus {
    margin-left: 6px;
    font-size: 18px;
}

.st-zoom {
    margin-left: 20px;
}

.st-fit {
    margin-left: 25px;
}

.st-update {
    margin-left: 23px;
    font-size: 14.400px;
}
```
